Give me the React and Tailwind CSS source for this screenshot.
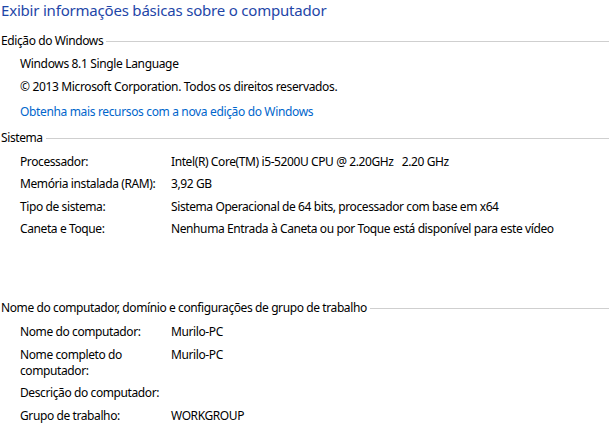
import React from "react";

const font = { fontFamily: '"Noto Sans", "Open Sans", sans-serif' };

function Section({ title, mt }) {
  return (
    <div className={`flex items-center h-[16px] leading-[16px] text-[12px] tracking-[-0.4px] text-black ${mt}`}>
      <span className="whitespace-nowrap pl-[1px]">{title}</span>
      <div className="flex-1 ml-[3px] border-t border-[#cfcfcf]" />
    </div>
  );
}

function Row({ label, value, mt }) {
  return (
    <div className={`flex pl-[20px] text-[12px] leading-[16px] tracking-[-0.4px] text-black ${mt}`}>
      <div className="w-[151px] shrink-0">{label}</div>
      <div className="whitespace-pre">{value}</div>
    </div>
  );
}

export default function App() {
  return (
    <div className="w-[609px] h-[430px] bg-white overflow-hidden" style={font}>
      <div className="pl-[1px] text-[15px] leading-[20px] tracking-[-0.2px] text-[#1e46a8] whitespace-nowrap">
        Exibir informações básicas sobre o computador
      </div>
      <Section title="Edição do Windows" mt="mt-[13px]" />
      <div className="pl-[20px] text-[12px] leading-[16px] tracking-[-0.35px] text-black mt-[7px]">Windows 8.1 Single Language</div>
      <div className="pl-[20px] text-[12px] leading-[16px] tracking-[-0.35px] text-black mt-[7px]">© 2013 Microsoft Corporation. Todos os direitos reservados.</div>
      <div className="pl-[20px] text-[12px] leading-[16px] tracking-[-0.35px] text-[#0066cc] mt-[9px]">Obtenha mais recursos com a nova edição do Windows</div>
      <Section title="Sistema" mt="mt-[10px]" />
      <Row label="Processador:" value="Intel(R) Core(TM) i5-5200U CPU @ 2.20GHz   2.20 GHz" mt="mt-[8px]" />
      <Row label="Memória instalada (RAM):" value="3,92 GB" mt="mt-[6px]" />
      <Row label="Tipo de sistema:" value="Sistema Operacional de 64 bits, processador com base em x64" mt="mt-[7px]" />
      <Row label="Caneta e Toque:" value="Nenhuma Entrada à Caneta ou por Toque está disponível para este vídeo" mt="mt-[6px]" />
      <Section title="Nome do computador, domínio e configurações de grupo de trabalho" mt="mt-[63px]" />
      <Row label="Nome do computador:" value="Murilo-PC" mt="mt-[8px]" />
      <Row label={<>Nome completo do<br />computador:</>} value="Murilo-PC" mt="mt-[7px]" />
      <Row label="Descrição do computador:" value="" mt="mt-[6px]" />
      <Row label="Grupo de trabalho:" value="WORKGROUP" mt="mt-[7px]" />
    </div>
  );
}
